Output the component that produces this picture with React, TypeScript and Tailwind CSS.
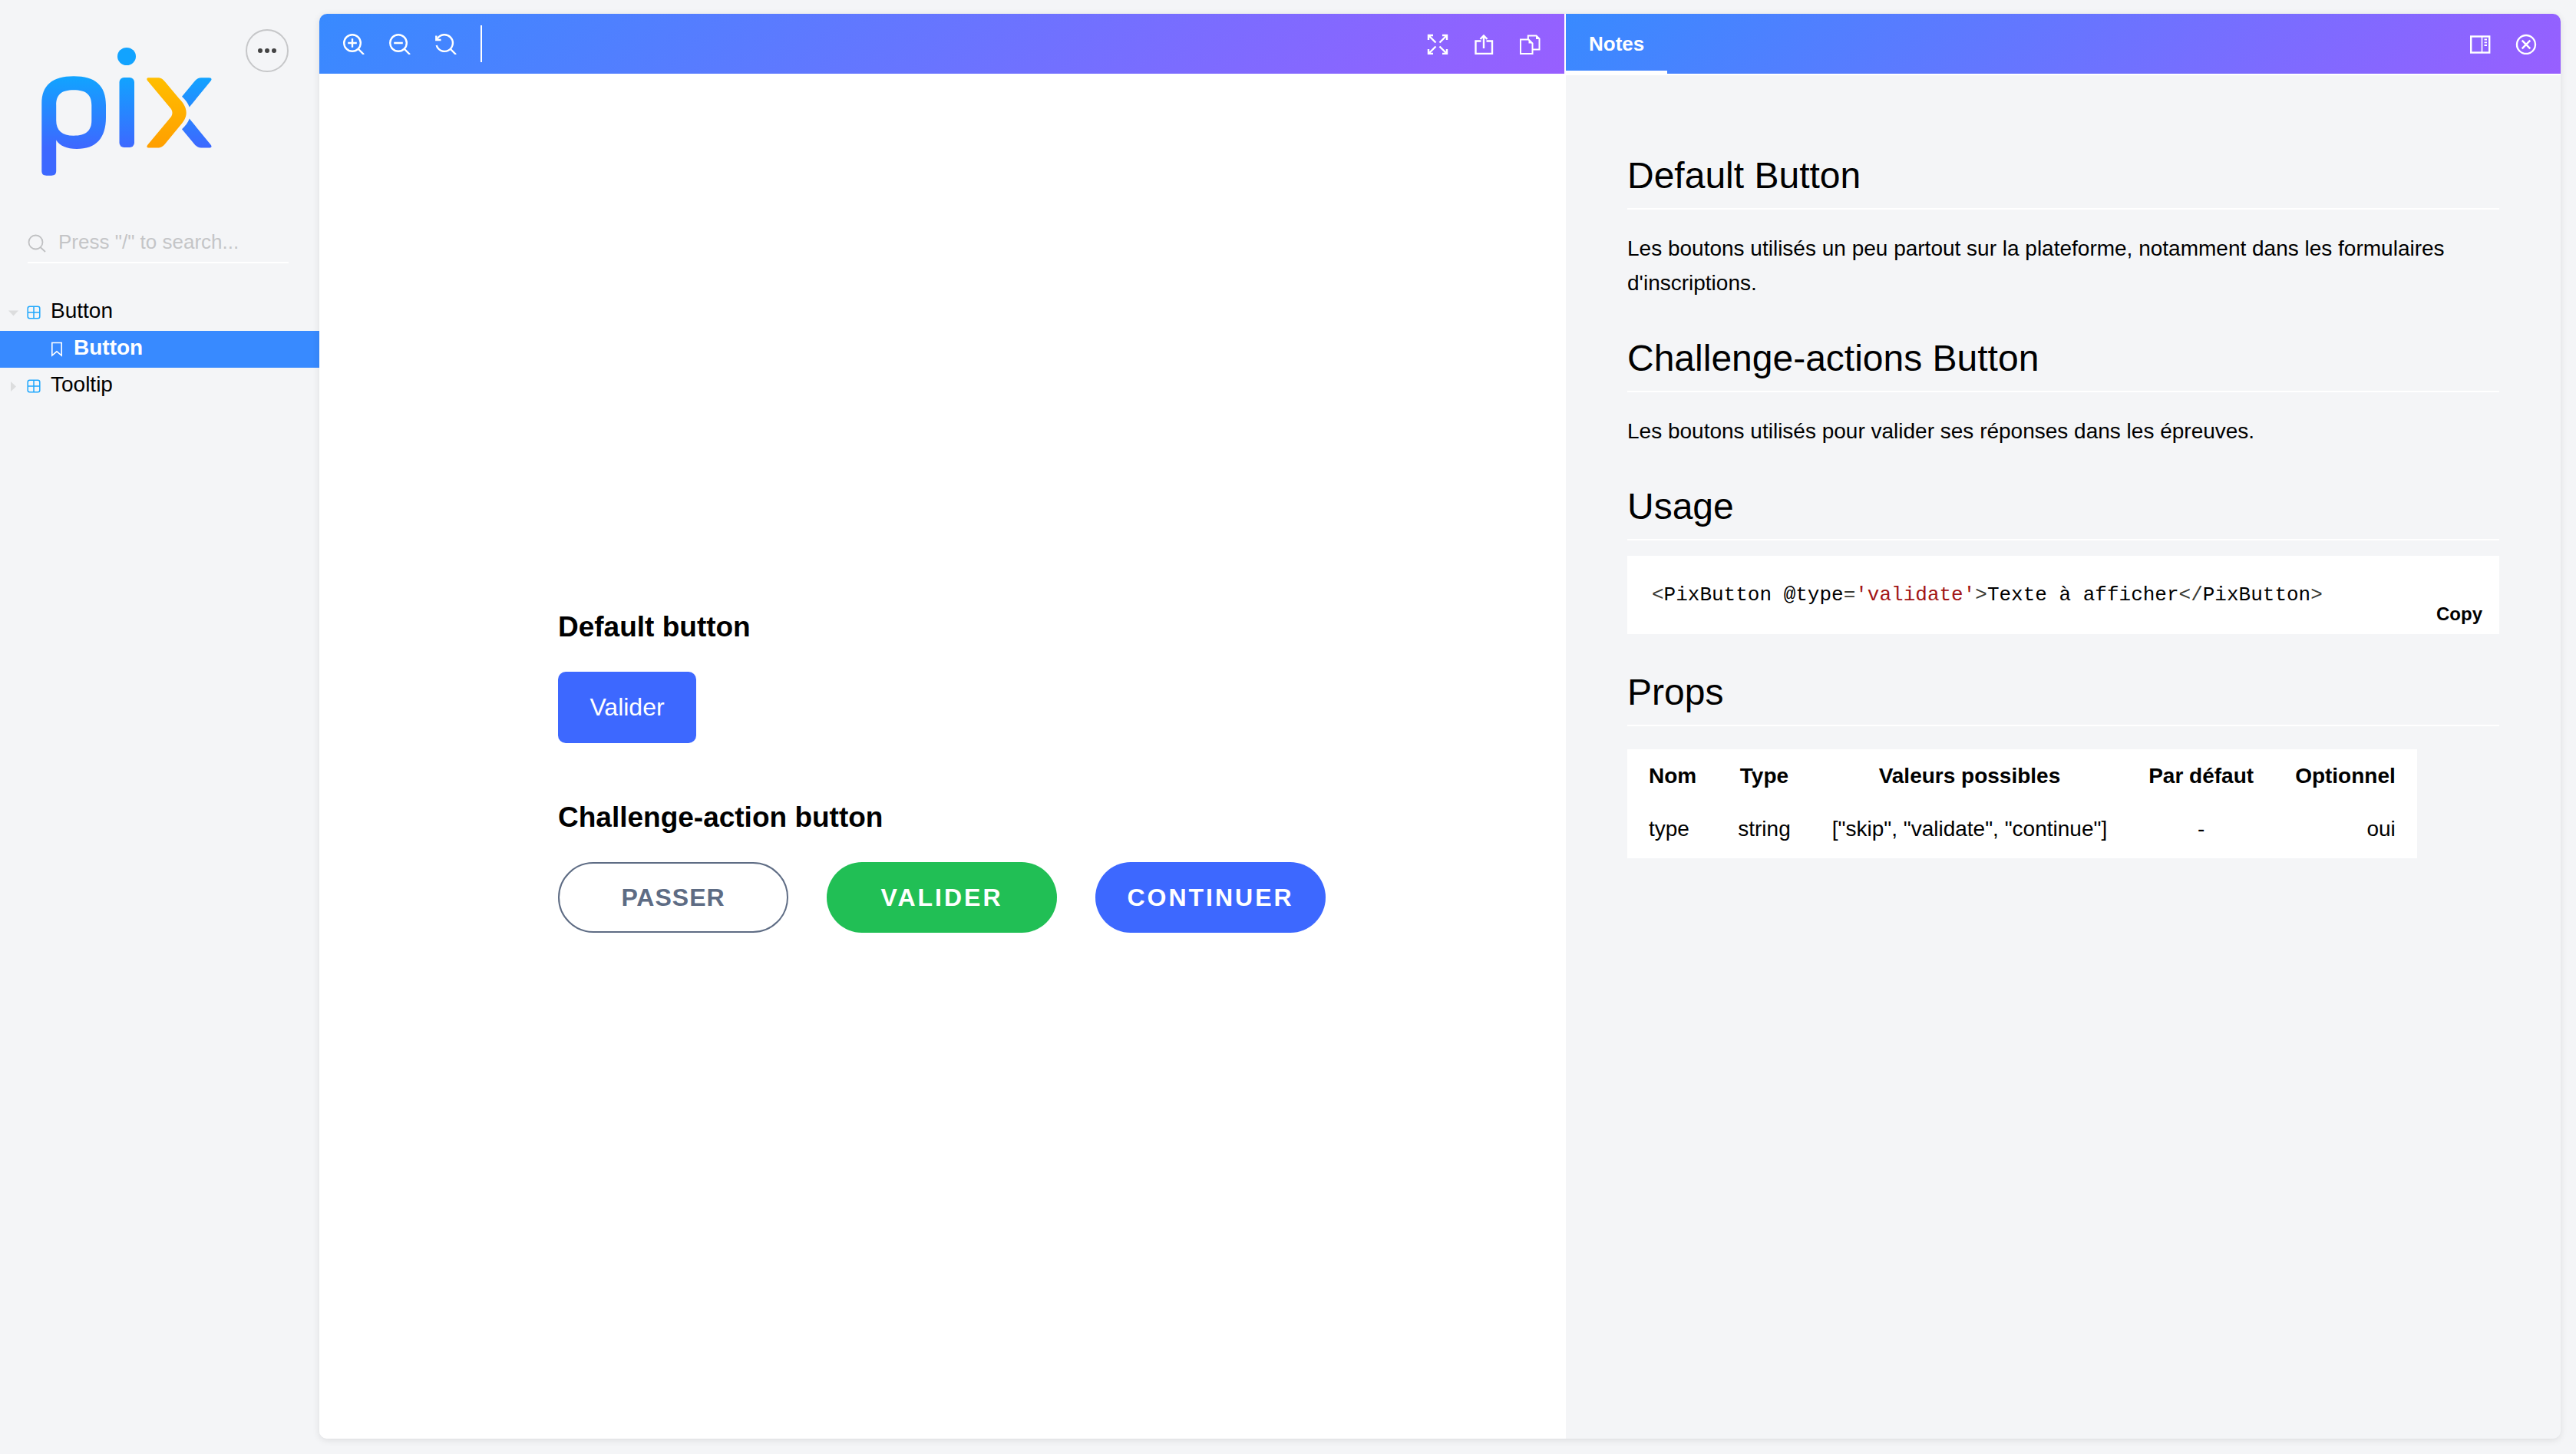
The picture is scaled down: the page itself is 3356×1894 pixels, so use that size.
import type { ReactNode } from 'react'

function Icon({ children }: { children: ReactNode }) {
  return (
    <svg className="size-7" viewBox="0 0 28 28" fill="none" stroke="currentColor" strokeWidth="2.400" aria-hidden="true">
      {children}
    </svg>
  )
}

function ToolButton({ label, children }: { label: string; children: ReactNode }) {
  return (
    <button type="button" aria-label={label} className="flex h-full w-15 items-center justify-center text-white">
      <Icon>{children}</Icon>
    </button>
  )
}

function Logo() {
  return (
    <svg className="mt-6 ml-[18px] h-[168px] w-[222px]" viewBox="54 62 222 168" role="img" aria-label="Pix">
      <defs>
        <linearGradient id="blue" gradientUnits="userSpaceOnUse" x1="0" y1="101" x2="0" y2="192">
          <stop offset="0" stopColor="#12A3FF" />
          <stop offset="1" stopColor="#3D68FF" />
        </linearGradient>
        <linearGradient id="orange" gradientUnits="userSpaceOnUse" x1="0" y1="101" x2="0" y2="192">
          <stop offset="0" stopColor="#FFBE00" />
          <stop offset="1" stopColor="#FF9F00" />
        </linearGradient>
      </defs>
      <ellipse cx="165" cy="73.5" rx="12" ry="11.5" fill="#12A3FF" />
      <rect x="155.500" y="101" width="19.500" height="91" rx="6" fill="url(#blue)" />
      <path
        fill="url(#blue)"
        fillRule="evenodd"
        d="M54.300 135C54.300 111 68 99.200 96 99.200C124 99.200 138 111 138 137V153C138 180 125 194 100 194C87 194 78 190 73.200 182.500V222.500C73.200 227 71 228.700 67 228.700H60.500C56.500 228.700 54.300 227 54.300 222.500ZM96 117.200C80 117.200 73.200 123 73.200 137V157C73.200 170 81 176.700 96 176.700C112 176.700 119.300 170 119.300 157V137C119.300 123 112 117.200 96 117.200Z"
      />
      <path
        fill="url(#orange)"
        d="M194 101.200H205C210 101.200 212 103 215 106.500L233 128C239 134 242.700 140 242.700 147C242.700 153 239.500 158 236 162L215 187.500C212 191 210 192.500 205 192.500H194C191.500 192.500 190.500 191 192.500 188.500L223 152C225 149 225 145 223 142L192.500 105.500C190.500 103 191 101.200 194 101.200Z"
      />
      <path
        fill="url(#blue)"
        d="M237 125.700L253 106.500C256 103 258.500 101.200 262 101.200H272.500C275.500 101.200 276.500 103 274.500 105.500L246.700 139.500C245 134 241.500 130 237 125.700Z"
      />
      <path
        fill="url(#blue)"
        d="M237 168.300L253 187.500C256 191 258.500 192.600 262 192.600H272.500C275.500 192.600 276.500 191 274.500 188.500L246.700 154.500C245 160 241.500 164 237 168.300Z"
      />
    </svg>
  )
}

function GridIcon() {
  return (
    <svg className="size-4.5 shrink-0" viewBox="0 0 18 18" fill="none" stroke="#1EA7FD" strokeWidth="1.500" aria-hidden="true">
      <rect x="1.200" y="1.200" width="15.600" height="15.600" rx="2.500" />
      <path d="M9 1.200V16.800M1.200 9H16.800" />
    </svg>
  )
}

function Sidebar() {
  return (
    <aside className="flex w-[416px] shrink-0 flex-col">
      <header className="flex items-start justify-between pt-[38px] pr-10 pl-9">
        <Logo />
        <button
          type="button"
          aria-label="Menu"
          className="flex size-14 items-center justify-center gap-[3px] rounded-full border-2 border-[#c6c7c9]"
        >
          <span className="size-1.5 rounded-full bg-[#444]" />
          <span className="size-1.5 rounded-full bg-[#444]" />
          <span className="size-1.5 rounded-full bg-[#444]" />
        </button>
      </header>

      <label className="mt-[60px] mr-10 ml-9 flex h-[53px] items-center gap-4 border-b-2 border-white">
        <svg className="mt-0.5 size-6 shrink-0" viewBox="0 0 24 24" fill="none" stroke="#bfc0c2" strokeWidth="1.800" aria-hidden="true">
          <circle cx="10.500" cy="10.500" r="9" />
          <path d="M16.500 17L23 23" />
        </svg>
        <input
          type="search"
          aria-label="Search"
          placeholder={'Press "/" to search...'}
          className="min-w-0 flex-1 bg-transparent text-[26px] outline-none placeholder:text-[#c4c5c7]"
        />
      </label>

      <nav className="mt-10 text-[28px] leading-8">
        <a href="#button" className="flex h-12 items-center pl-[11px]">
          <svg className="size-[13px]" viewBox="0 0 13 13" fill="#dcddde" aria-hidden="true">
            <path d="M0 3.500H13L6.500 10.500Z" />
          </svg>
          <span className="ml-[11px] flex">
            <GridIcon />
          </span>
          <span className="ml-[13px] pb-1">Button</span>
        </a>
        <a href="#button-story" aria-current="page" className="flex h-12 items-center bg-[#388aff] pl-[66px] font-bold text-white">
          <svg className="h-5 w-4" viewBox="0 0 16 20" fill="none" stroke="currentColor" strokeWidth="1.600" aria-hidden="true">
            <path d="M1.800 1.500H14.200V18L8 12.800L1.800 18Z" />
          </svg>
          <span className="ml-3.5 pb-1">Button</span>
        </a>
        <a href="#tooltip" className="flex h-12 items-center pl-[11px]">
          <svg className="size-[13px]" viewBox="0 0 13 13" fill="#dcddde" aria-hidden="true">
            <path d="M3 0V13L10 6.500Z" />
          </svg>
          <span className="ml-[11px] flex">
            <GridIcon />
          </span>
          <span className="ml-[13px] pb-1">Tooltip</span>
        </a>
      </nav>
    </aside>
  )
}

function Canvas() {
  return (
    <section className="flex min-w-0 flex-1 flex-col bg-white">
      <div className="flex h-[78px] items-center bg-[linear-gradient(135deg,#388aff_0%,#985fff_100%)] px-[15px]">
        <ToolButton label="Zoom in">
          <circle cx="12" cy="13" r="10.800" />
          <path d="M12 7.200V18.800M6.200 13H17.800M19.500 20.500L27 28" />
        </ToolButton>
        <ToolButton label="Zoom out">
          <circle cx="12" cy="13" r="10.800" />
          <path d="M6.200 13H17.800M19.500 20.500L27 28" />
        </ToolButton>
        <ToolButton label="Reset zoom">
          <path d="M1.700 16A10.800 10.800 0 1 0 3 7.200M19.500 20.500L27 28" />
          <path d="M1.300 3.500V9H7.500" />
          <path d="M1 5L6 9.500H1Z" fill="currentColor" stroke="none" />
        </ToolButton>
        <span className="ml-[15px] h-12 w-0.5 bg-white" />
        <span className="flex-1" />
        <ToolButton label="Go full screen">
          <path d="M2 9V3H8M2 3L11.500 12.500M20 3H26V9M26 3L16.500 12.500M2 21V27H8M2 27L11.500 17.500M26 21V27H20M26 27L16.500 17.500" />
        </ToolButton>
        <ToolButton label="Open canvas in new tab">
          <path d="M10.500 10.500H3.500V27H25V10.500H17.500" />
          <path d="M14 3.500V20M9.500 8L14 3.500L18.500 8" />
        </ToolButton>
        <ToolButton label="Copy canvas link">
          <path d="M2 8.500H12.500L17.500 13.500V27H2Z" strokeWidth="2" />
          <path d="M12.500 8.500V13.500H17.500Z" fill="currentColor" stroke="none" />
          <path d="M11.800 8V3.500H22.500L26.500 7.500V21.500H18" strokeWidth="2" />
          <path d="M22 3V8H27Z" fill="currentColor" stroke="none" />
        </ToolButton>
      </div>

      <div className="flex flex-1 items-center justify-center pt-10">
        <div>
          <h3 className="text-[37px] leading-[44px] font-bold">Default button</h3>
          <button type="button" className="mt-9 block h-[93px] w-45 rounded-[10px] bg-[#3d68ff] pb-0.5 text-[32px] text-white">
            Valider
          </button>
          <h3 className="mt-[75px] text-[37px] leading-[44px] font-bold">Challenge-action button</h3>
          <div className="mt-9 flex gap-[50px] text-[32px] font-bold">
            <button type="button" className="h-23 w-[300px] rounded-full border-2 border-[#5e6c84] tracking-[1px] text-[#5e6c84]">
              PASSER
            </button>
            <button type="button" className="h-23 w-[300px] rounded-full bg-[#21bf55] tracking-[3px] text-white">
              VALIDER
            </button>
            <button type="button" className="h-23 w-[300px] rounded-full bg-[#3d68ff] tracking-[3px] text-white">
              CONTINUER
            </button>
          </div>
        </div>
      </div>
    </section>
  )
}

function Heading({ children }: { children: ReactNode }) {
  return <h2 className="border-b-2 border-white pb-3.5 text-[48px] leading-[56px]">{children}</h2>
}

function Notes() {
  return (
    <section className="flex w-[1298px] shrink-0 flex-col border-l-2 border-white">
      <div className="flex h-20 items-stretch border-b-2 border-white bg-[linear-gradient(135deg,#388aff_0%,#985fff_100%)] bg-origin-border pr-[15px]">
        <button type="button" className="border-y-4 border-t-transparent border-b-white px-[30px] text-[26px] font-bold text-white">
          Notes
        </button>
        <span className="flex-1" />
        <ToolButton label="Change addons orientation">
          <rect x="2.200" y="4.500" width="24" height="21" />
          <path d="M16.500 4.500V25.500" strokeWidth="1.600" />
          <path d="M19.500 8.500H23M19.500 12.300H23M19.500 16H23" strokeWidth="1.800" />
        </ToolButton>
        <ToolButton label="Hide addons">
          <circle cx="14" cy="15" r="12" />
          <path d="M8.700 9.700L19.300 20.300M19.300 9.700L8.700 20.300" strokeWidth="2.500" />
        </ToolButton>
      </div>

      <article className="flex flex-col gap-12 px-20 pt-[103px] text-[28px] leading-[45px]">
        <section>
          <Heading>Default Button</Heading>
          <p className="mt-7">
            Les boutons utilisés un peu partout sur la plateforme, notamment dans les formulaires d'inscriptions.
          </p>
        </section>
        <section>
          <Heading>Challenge-actions Button</Heading>
          <p className="mt-7">Les boutons utilisés pour valider ses réponses dans les épreuves.</p>
        </section>
        <section>
          <Heading>Usage</Heading>
          <div className="relative mt-5 bg-white px-8 py-7">
            <pre className="font-['Liberation_Mono',monospace] text-[26px] leading-[46px]">
              <code className="font-['Liberation_Mono',monospace]">
                <span className="text-[#393a34]">&lt;</span>PixButton @type<span className="text-[#393a34]">=</span>
                <span className="text-[#a31515]">'validate'</span>
                <span className="text-[#393a34]">&gt;</span>Texte à afficher<span className="text-[#393a34]">&lt;/</span>PixButton
                <span className="text-[#393a34]">&gt;</span>
              </code>
            </pre>
            <button type="button" className="absolute right-0 bottom-0 px-[22px] pb-3 text-2xl leading-7 font-bold">
              Copy
            </button>
          </div>
        </section>
        <section>
          <Heading>Props</Heading>
          <table className="mt-[30px] border-collapse bg-white leading-[45px] [&_td]:border-2 [&_td]:border-white [&_td]:px-[26px] [&_td]:pt-2.5 [&_td]:pb-3.5 [&_th]:border-2 [&_th]:border-white [&_th]:px-[26px] [&_th]:pt-2.5 [&_th]:pb-3">
            <thead>
              <tr>
                <th className="text-left">Nom</th>
                <th className="text-center">Type</th>
                <th className="text-center">Valeurs possibles</th>
                <th className="text-center">Par défaut</th>
                <th className="text-right">Optionnel</th>
              </tr>
            </thead>
            <tbody>
              <tr>
                <td className="text-left">type</td>
                <td className="text-center">string</td>
                <td className="text-center">["skip", "validate", "continue"]</td>
                <td className="text-center">-</td>
                <td className="text-right">oui</td>
              </tr>
            </tbody>
          </table>
        </section>
      </article>
    </section>
  )
}

export default function App() {
  return (
    <div className="flex min-h-screen bg-[#f4f5f7] font-['Liberation_Sans',Arial,sans-serif] text-black">
      <Sidebar />
      <main className="mt-[18px] mr-5 mb-5 flex min-w-0 flex-1 overflow-hidden rounded-[10px] shadow-[0_2px_10px_rgba(0,0,0,0.1)]">
        <Canvas />
        <Notes />
      </main>
    </div>
  )
}
